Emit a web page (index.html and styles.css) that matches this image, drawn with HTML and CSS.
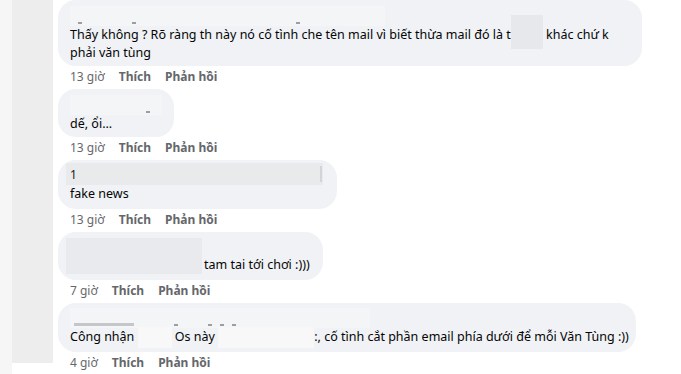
FILE: index.html
```html
<!DOCTYPE html>
<html>
<head>
    <link rel="stylesheet" href="styles.css">
</head>
<body>
    <div class="page">
        <div class="edge"></div>
        <div class="rail"></div>
        <div class="thread">
            <div class="comment">
                <div class="bubble wide">
                    <div class="name-blur" style="width: 315px"><i class="bit" style="margin-left: 8px"></i><i class="bit" style="margin-left: 50px"></i><i class="bit" style="margin-left: 160px"></i></div>
                    <p class="text">Thấy không ? Rõ ràng th này nó cố tình che tên mail vì biết thừa mail đó là t<span class="patch dark" style="width: 32px"></span> khác chứ k<br>phải văn tùng</p>
                </div>
                <div class="actions"><span class="time">13 giờ</span><span class="act">Thích</span><span class="act">Phản hồi</span></div>
            </div>

            <div class="comment">
                <div class="bubble">
                    <div class="name-blur" style="width: 92px"><i class="bit" style="margin-left: 76px"></i></div>
                    <p class="text">dế, ổi...</p>
                </div>
                <div class="actions"><span class="time">13 giờ</span><span class="act">Thích</span><span class="act">Phản hồi</span></div>
            </div>

            <div class="comment">
                <div class="bubble fake">
                    <div class="name-blur grey" style="width: 257px"><span class="one">1</span><span class="bar"></span></div>
                    <p class="text">fake news</p>
                </div>
                <div class="actions"><span class="time">13 giờ</span><span class="act">Thích</span><span class="act">Phản hồi</span></div>
            </div>

            <div class="comment">
                <div class="bubble row">
                    <div class="block-blur"></div>
                    <p class="text">tam tai tới chơi :)))</p>
                </div>
                <div class="actions"><span class="time">7 giờ</span><span class="act">Thích</span><span class="act">Phản hồi</span></div>
            </div>

            <div class="comment">
                <div class="bubble last">
                    <div class="name-blur" style="width: 300px"><i class="bit long" style="margin-left: 4px"></i><i class="bit" style="margin-left: 40px"></i><i class="bit" style="margin-left: 30px"></i><i class="bit" style="margin-left: 8px"></i><i class="bit" style="margin-left: 8px"></i></div>
                    <p class="text">Công nhận <span class="patch light" style="width: 34px"></span> Os này <span class="patch light" style="width: 96px"></span>:, cố tình cắt phần email phía dưới để mỗi Văn Tùng :))</p>
                </div>
                <div class="actions"><span class="time">4 giờ</span><span class="act">Thích</span><span class="act">Phản hồi</span></div>
            </div>
        </div>
    </div>
</body>
</html>
```

FILE: styles.css
```css
body {
    margin: 0;
    background: #ffffff;
    font-family: "Noto Sans", "Open Sans", sans-serif;
    color: #050505;
}
.page {
    display: flex;
    align-items: flex-start;
    height: 374px;
    overflow: hidden;
}
.edge {
    width: 12px;
    height: 374px;
    background: #f6f6f6;
    flex-shrink: 0;
}
.rail {
    width: 41px;
    height: 363px;
    background: #ededed;
    flex-shrink: 0;
}
.thread {
    padding-left: 5px;
}
.comment {
    display: flex;
    flex-direction: column;
    align-items: flex-start;
}
.bubble {
    background: #f0f2f5;
    border-radius: 18px;
    padding: 6px 12px 4px;
    box-sizing: border-box;
}
.bubble.wide {
    width: 584px;
}
.bubble.fake {
    width: 279px;
    padding-left: 8px;
    padding-top: 3px;
    padding-bottom: 6px;
}
.bubble.last {
    width: 578px;
    padding-top: 5px;
    padding-bottom: 6px;
}
.bubble.row {
    display: flex;
    align-items: flex-end;
    width: 265px;
    padding: 6px 12px 6px 8px;
}
.name-blur {
    display: flex;
    align-items: flex-end;
    height: 20px;
    padding-bottom: 2px;
    box-sizing: border-box;
    background: #f4f5f7;
    filter: blur(0.6px);
}
.bit {
    display: block;
    width: 4px;
    height: 2px;
    background: #9c9ea2;
}
.bit.long {
    width: 60px;
    height: 3px;
    background: #c4c6ca;
}
.name-blur.grey {
    align-items: center;
    justify-content: space-between;
    height: 22px;
    padding-bottom: 0;
    background: #e9eaec;
    filter: none;
}
.one {
    color: #1c1c1c;
    font-size: 12px;
    padding-left: 4px;
}
.bar {
    width: 2px;
    height: 16px;
    background: #d3d4d6;
    margin-right: 1px;
}
.bubble.fake .text {
    padding-left: 4px;
}
.block-blur {
    width: 136px;
    height: 36px;
    background: #e9eaed;
    flex-shrink: 0;
}
.bubble.row .text {
    padding-left: 2px;
}
.text {
    margin: 0;
    font-size: 12.5px;
    line-height: 18px;
    white-space: nowrap;
}
.patch {
    display: inline-block;
    position: relative;
    height: 18px;
    vertical-align: top;
}
.patch::before {
    content: "";
    position: absolute;
    left: 0;
    right: 0;
    top: -1px;
    bottom: -2px;
}
.patch.dark::before {
    background: #e7e8eb;
    top: -11px;
    bottom: -5px;
}
.patch.light::before {
    background: #f8f8f9;
}
.actions {
    display: flex;
    gap: 14px;
    font-size: 12px;
    line-height: 20px;
    height: 20px;
    padding: 1px 0 0 12px;
    margin-bottom: 2px;
    color: #65676b;
}
.act {
    font-weight: 700;
}
```
